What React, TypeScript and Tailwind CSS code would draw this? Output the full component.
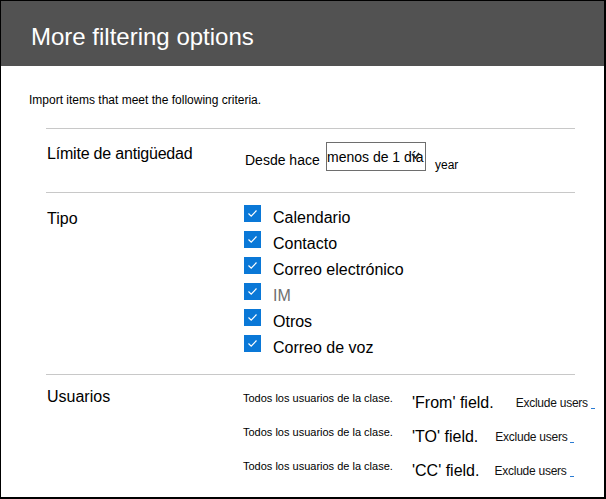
import React from 'react';

const font = { fontFamily: '"Liberation Sans", Arial, sans-serif' };

const types: { label: string; dim?: boolean; shift?: string }[] = [
  { label: 'Calendario' },
  { label: 'Contacto' },
  { label: 'Correo electrónico', shift: 'ml-[1px]' },
  { label: 'IM', dim: true },
  { label: 'Otros' },
  { label: 'Correo de voz', shift: '-ml-[1px]' },
];

const userRows = [
  { field: "'From' field.", gap: 'ml-[22px]' },
  { field: "'TO' field.", gap: 'ml-[17px]' },
  { field: "'CC' field.", gap: 'ml-[15px]' },
];

const CheckBox: React.FC = () => (
  <span className="w-[17px] h-[17px] bg-[#0a78d7] flex items-center justify-center shrink-0">
    <svg width="17" height="17" viewBox="0 0 17 17">
      <polyline points="4.5,8.5 7.2,11.2 12.5,5.5" fill="none" stroke="#ffffff" strokeWidth="1.2" />
    </svg>
  </span>
);

const Divider: React.FC = () => <div className="h-px bg-[#c8c8c8] ml-[45px] mr-[29px]" />;

export default function App() {
  return (
    <div
      className="w-[606px] h-[499px] bg-white border-l border-t border-r-2 border-b-2 border-black overflow-hidden text-black"
      style={font}
    >
      <div className="h-[65px] bg-[#525252] pl-[30px] pt-[22px]">
        <h1 className="text-[24px] leading-[28px] text-white">More filtering options</h1>
      </div>

      <p className="text-[12px] leading-[14px] pl-[28px] mt-[27px] mb-[21px]">Import items that meet the following criteria.</p>

      <Divider />

      {/* age limit */}
      <div className="flex ml-[46px] h-[63px]">
        <div className="w-[198px] text-[16px] leading-[18px] mt-[16px] tracking-[-0.2px]">Límite de antigüedad</div>
        <div className="flex items-start mt-[13px]">
          <span className="text-[14px] leading-[16px] mt-[10px] w-[81px] shrink-0">Desde hace</span>
          <div className="relative w-[100px] h-[29px] border border-[#6e6e6e] overflow-hidden">
            <span className="absolute left-[0px] top-[6px] text-[14px] leading-[16px] whitespace-nowrap">menos de 1 día</span>
            <svg className="absolute right-[5px] top-[9px]" width="9" height="8" viewBox="0 0 9 8">
              <polyline points="1,2 4.5,6 8,1" fill="none" stroke="#222222" strokeWidth="1.6" />
            </svg>
          </div>
          <span className="text-[12px] leading-[14px] ml-[9px] mt-[16px]">year</span>
        </div>
      </div>

      <Divider />

      {/* type */}
      <div className="flex ml-[46px] pt-[12px] pb-[13px]">
        <div className="w-[197px] text-[16px] leading-[18px] mt-[5px]">Tipo</div>
        <div className="flex flex-col">
          {types.map(t => (
            <div key={t.label} className="h-[26px] flex items-start">
              <CheckBox />
              <span className={`text-[16px] leading-[18px] mt-[4px] ml-[12px] ${t.shift ?? ''} ${t.dim ? 'text-[#707070]' : ''}`}>
                {t.label}
              </span>
            </div>
          ))}
        </div>
      </div>

      <Divider />

      {/* users */}
      <div className="flex ml-[46px]">
        <div className="w-[196px] text-[16px] leading-[18px] mt-[13px]">Usuarios</div>
        <div className="flex flex-col mt-[17px]">
          {userRows.map(r => (
            <div key={r.field} className="h-[34px] flex items-start">
              <span className="w-[169px] shrink-0 text-[11px] leading-[13px]">Todos los usuarios de la clase.</span>
              <span className="text-[16px] leading-[18px] mt-[2px]">{r.field}</span>
              <span className={`${r.gap} text-[12px] leading-[14px] mt-[4px] tracking-[-0.25px] text-[#111111]`}>Exclude users</span>
              <span className="ml-[3px] mt-[16px] w-[4px] h-px bg-[#2b7cd3]" />
            </div>
          ))}
        </div>
      </div>
    </div>
  );
}
